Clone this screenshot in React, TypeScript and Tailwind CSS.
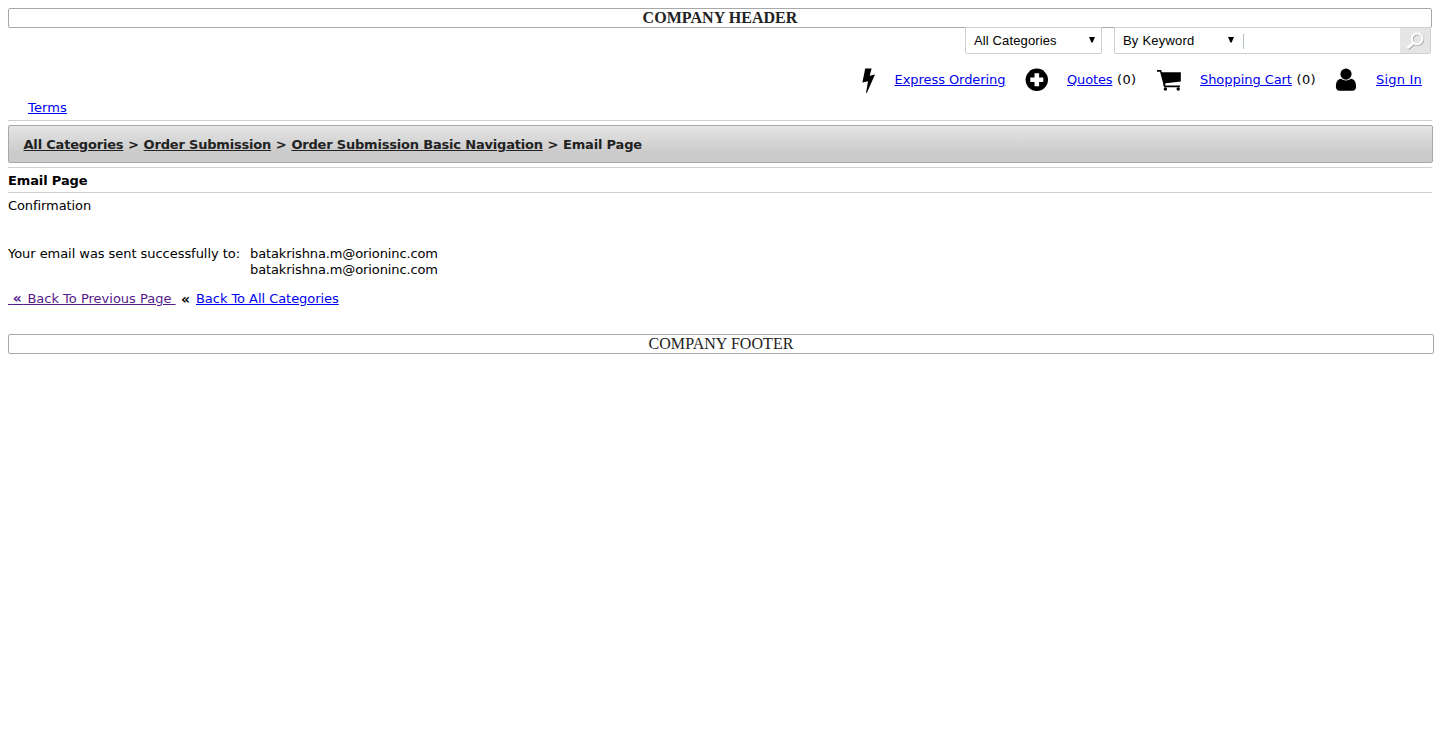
import React from "react";

const link = "text-[#0000ee] underline";

function Bolt() {
  return (
    <svg className="block h-[26px] w-[14px]" viewBox="0 0 14 26">
      <path d="M4.2 1.5H10.6L8.7 8.8L14 7.6L5.8 26H5L7 14.2L1.4 15.6Z" fill="#000" />
    </svg>
  );
}

function Plus() {
  return (
    <svg className="block h-[26px] w-[26px]" viewBox="0 0 26 26">
      <circle cx="12.8" cy="12.8" r="11.2" fill="#000" />
      <path d="M12.8 6.3v13M6.3 12.8h13" stroke="#fff" strokeWidth="4.6" />
    </svg>
  );
}

function Cart() {
  return (
    <svg className="block h-[26px] w-[26px]" viewBox="0 0 26 26">
      <path d="M0 3.9H3.6L7.8 19.4H23" fill="none" stroke="#000" strokeWidth="1.6" />
      <path d="M4 5.2H23.8V14.6L6.8 16.4Z" fill="#000" />
      <path d="M7 19L8 15" stroke="#000" strokeWidth="1.4" />
      <circle cx="8.4" cy="22" r="1.7" />
      <circle cx="21.2" cy="22" r="1.7" />
    </svg>
  );
}

function User() {
  return (
    <svg className="block h-[26px] w-[22px]" viewBox="0 0 22 26">
      <path d="M.9 19.6C.9 15 2.8 12 6.2 11.8C9 14.1 13 14.1 15.8 11.8C19.2 12 21.1 15 21.1 19.6C21.1 22.3 19.8 23.8 17.6 23.8H4.4C2.2 23.8 .9 22.3 .9 19.6Z" />
      <circle cx="11" cy="7.1" r="5.6" />
    </svg>
  );
}

function Magnifier() {
  return (
    <svg className="h-[20px] w-[20px]" viewBox="0 0 20 20" fill="none">
      <g stroke="#a5a5a5" strokeWidth="2" strokeLinecap="round">
        <circle cx="13" cy="8.6" r="5.3" />
        <path d="M9 12.8L4 17.2" strokeWidth="3" />
      </g>
      <g stroke="#fff" strokeWidth="2" strokeLinecap="round">
        <circle cx="12.2" cy="7.9" r="5.3" />
        <path d="M8.2 12L3.3 16.5" strokeWidth="2.6" />
      </g>
    </svg>
  );
}

function Arrow() {
  return (
    <svg className="block h-[6px] w-[6px]" viewBox="0 0 6 6">
      <path d="M0 0H6L3.6 5.6H2.4Z" />
    </svg>
  );
}

function Separator() {
  return <span className="tracking-[0.1px]">{" > "}</span>;
}

export default function App() {
  return (
    <div className="h-[745px] overflow-hidden bg-white pt-[8px] pl-[8px] font-['DejaVu_Sans',sans-serif] text-[13px] leading-[16px] whitespace-pre text-black">
      <header className="h-[20px] w-[1424px] rounded-[2px] border border-[#a8a8a8] text-center font-['Liberation_Serif',serif] text-[16px] leading-[18px] font-bold tracking-[0.05px] text-[#222]">
        COMPANY HEADER
      </header>

      <div className="-mt-px flex h-[27px] w-[1423px] justify-end gap-[12px] font-['Liberation_Sans',sans-serif]">
        <div className="relative flex w-[137px] items-center justify-between rounded-b-[2px] border border-[#d0d0d0] bg-white pr-[6px] pl-[8px]">
          <span className="tracking-[0.13px]">All Categories</span>
          <span className="-mt-[2px]"><Arrow /></span>
        </div>
        <div className="relative flex w-[317px] items-center rounded-b-[2px] border border-[#d0d0d0] bg-white pl-[8px]">
          <span className="w-[105px] tracking-[0.2px]">By Keyword</span>
          <span className="-mt-[2px]"><Arrow /></span>
          <span className="mt-[2px] ml-[9px] h-[15px] w-px bg-[#b5c4bb]" />
          <div className="ml-auto flex h-full w-[30px] items-center justify-center bg-[#e5e5e5]">
            <Magnifier />
          </div>
        </div>
      </div>

      <nav className="mt-[13px] flex h-[26px] w-[1424px] items-center">
        <div className="ml-[853px] w-[33.5px]"><Bolt /></div>
        <a className={link + " mr-auto tracking-[-0.06px]"}>Express Ordering</a>
        <div className="w-[43px]"><Plus /></div>
        <div className="w-[90px]"><a className={link + " tracking-[-0.15px]"}>Quotes</a><span className="tracking-[0.4px]"> (0)</span></div>
        <div className="w-[43px]"><Cart /></div>
        <div className="w-[135px]"><a className={link + " tracking-[-0.06px]"}>Shopping Cart</a><span className="tracking-[0.4px]"> (0)</span></div>
        <div className="w-[41px]"><User /></div>
        <div className="w-[56px]"><a className={link + " tracking-[0.2px]"}>Sign In</a></div>
      </nav>

      <div className="mt-[6px] h-[22px] w-[1424px] border-b border-[#d0d0d0] pt-px pl-[20px]">
        <a className={link + " tracking-[0.15px]"}>Terms</a>
      </div>

      <div className="mt-[4px] h-[38px] w-[1425px] rounded-[2px] border border-[#a8a8a8] bg-linear-to-b from-[#e5e5e5] to-[#cacaca] to-75% pl-[14.5px] leading-[37px] font-bold tracking-[-0.19px] text-[#222]">
        <a className="underline">All Categories</a>
        <Separator />
        <a className="underline">Order Submission</a>
        <Separator />
        <a className="underline">Order Submission Basic Navigation</a>
        <Separator />
        Email Page
      </div>

      <h1 className="mt-[4px] h-[26px] w-[1424px] border-y border-[#d0d0d0] leading-[25px] font-bold tracking-[-0.13px]">Email Page</h1>
      <p className="mt-[5px] tracking-[-0.08px]">Confirmation</p>

      <div className="mt-[32px] flex">
        <div className="w-[242px] tracking-[-0.05px]">Your email was sent successfully to:</div>
        <div className="tracking-[-0.11px]">
          <p>batakrishna.m@orioninc.com</p>
          <p>batakrishna.m@orioninc.com</p>
        </div>
      </div>

      <div className="mt-[13px] flex h-[16px]">
        <a className="w-[173px] text-[#551a8b] underline"><span className="tracking-[0.5px]"> </span><b className="text-[14px] leading-none tracking-[1.6px]">«</b> Back To Previous Page </a>
        <b className="w-[15px] text-[14px]">«</b>
        <a className={link + " tracking-[-0.05px]"}>Back To All Categories</a>
      </div>

      <footer className="mt-[27px] h-[20px] w-[1426px] rounded-[2px] border border-[#a8a8a8] text-center font-['Liberation_Serif',serif] text-[16px] leading-[18px] tracking-[0.05px] text-[#222]">
        COMPANY FOOTER
      </footer>
    </div>
  );
}
